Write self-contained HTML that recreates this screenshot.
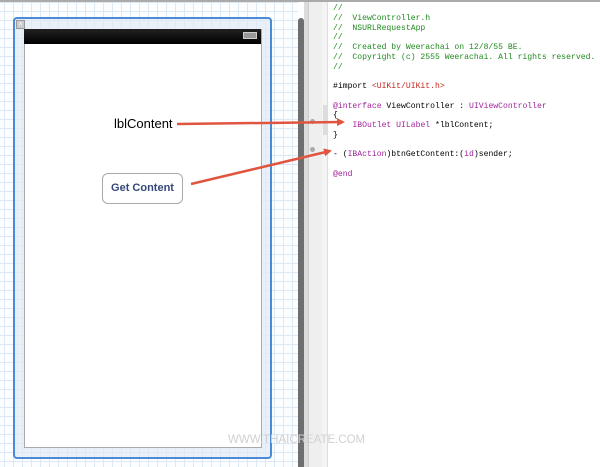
<!DOCTYPE html>
<html><head><style>
body{margin:0;width:600px;height:467px;overflow:hidden;background:#fff;position:relative;font-family:"Liberation Sans",sans-serif}
.grid{position:absolute;left:0;top:0;width:298px;height:467px;background-color:#fbfdff;
background-image:linear-gradient(#dde8f5 1px,transparent 1px),linear-gradient(90deg,#dde8f5 1px,transparent 1px);
background-size:9px 9px;background-position:4px 2px}
.code{position:absolute;left:333px;top:4px;font-family:"Liberation Mono",monospace;font-size:8.1px;line-height:9.75px;white-space:pre;color:#000}
.c{color:#1f8a1f}.p{color:#a0249a}.r{color:#c4261d}
</style></head><body>
<div class="grid"></div>
<div style="position:absolute;left:0;top:0;width:600px;height:2px;background:#aaa"></div>
<div style="position:absolute;left:298px;top:18px;width:6px;height:449px;background:#6e6e6e;border-radius:3px 3px 0 0"></div>
<div style="position:absolute;left:304px;top:2px;width:4px;height:465px;background:#dcdcdc"></div>
<div style="position:absolute;left:308px;top:2px;width:14px;height:465px;background:#efefef;border-left:1px solid #ccc"></div>
<div style="position:absolute;left:322px;top:2px;width:5px;height:465px;background:#f4f4f4;border-right:1px solid #ddd"></div>
<div style="position:absolute;left:323px;top:105px;width:4px;height:30px;background:#ddd"></div>
<div style="position:absolute;left:310px;top:119px;width:5px;height:5px;border-radius:50%;background:#aaa"></div>
<div style="position:absolute;left:310px;top:147px;width:5px;height:5px;border-radius:50%;background:#aaa"></div>
<div style="position:absolute;left:13px;top:17px;width:255px;height:438px;border:2px solid #4a8ad6;border-radius:4px;background:rgba(225,233,243,.7)"></div>
<div style="position:absolute;left:16px;top:20px;width:7px;height:7px;background:#ccc;border:1px solid #999;font-size:7px;line-height:7px;text-align:center;color:#fff">×</div>
<div style="position:absolute;left:24px;top:29px;width:236px;height:418px;background:#fff;border:1px solid #aaa;border-top:none"></div>
<div style="position:absolute;left:24px;top:29px;width:237px;height:15px;background:linear-gradient(#222,#000)"></div>
<div style="position:absolute;left:243px;top:32px;width:12px;height:5px;border:1px solid #ccc;background:#999"></div>
<div style="position:absolute;left:114px;top:116px;font-size:13px;color:#000">lblContent</div>
<div style="position:absolute;left:102px;top:173px;width:79px;height:29px;border:1px solid #aaa;border-radius:6px;background:#fff;font-size:11px;font-weight:bold;color:#34497a;text-align:center;line-height:29px">Get Content</div>
<div style="position:absolute;left:228px;top:434px;font-size:11.5px;color:#d0d0d0">WWW.THAICREATE.COM</div>
<div class="code"><span class="c">//
//  ViewController.h
//  NSURLRequestApp
//
//  Created by Weerachai on 12/8/55 BE.
//  Copyright (c) 2555 Weerachai. All rights reserved.
//</span>

#import <span class="r">&lt;UIKit/UIKit.h&gt;</span>

<span class="p">@interface</span> ViewController : <span class="p">UIViewController</span>
{
    <span class="p">IBOutlet</span> <span class="p">UILabel</span> *lblContent;
}

- (<span class="p">IBAction</span>)btnGetContent:(<span class="p">id</span>)sender;

<span class="p">@end</span></div>
<svg style="position:absolute;left:0;top:0" width="600" height="467">
<defs><marker id="a" markerWidth="8" markerHeight="8" refX="6" refY="4" orient="auto" markerUnits="userSpaceOnUse"><path d="M0,0 L8,4 L0,8 Z" fill="#e0553f"/></marker></defs>
<line x1="177" y1="124" x2="343" y2="122" stroke="#e0553f" stroke-width="2.5" marker-end="url(#a)"/>
<line x1="191" y1="184" x2="330" y2="151" stroke="#e0553f" stroke-width="2.5" marker-end="url(#a)"/>
</svg>
</body></html>
